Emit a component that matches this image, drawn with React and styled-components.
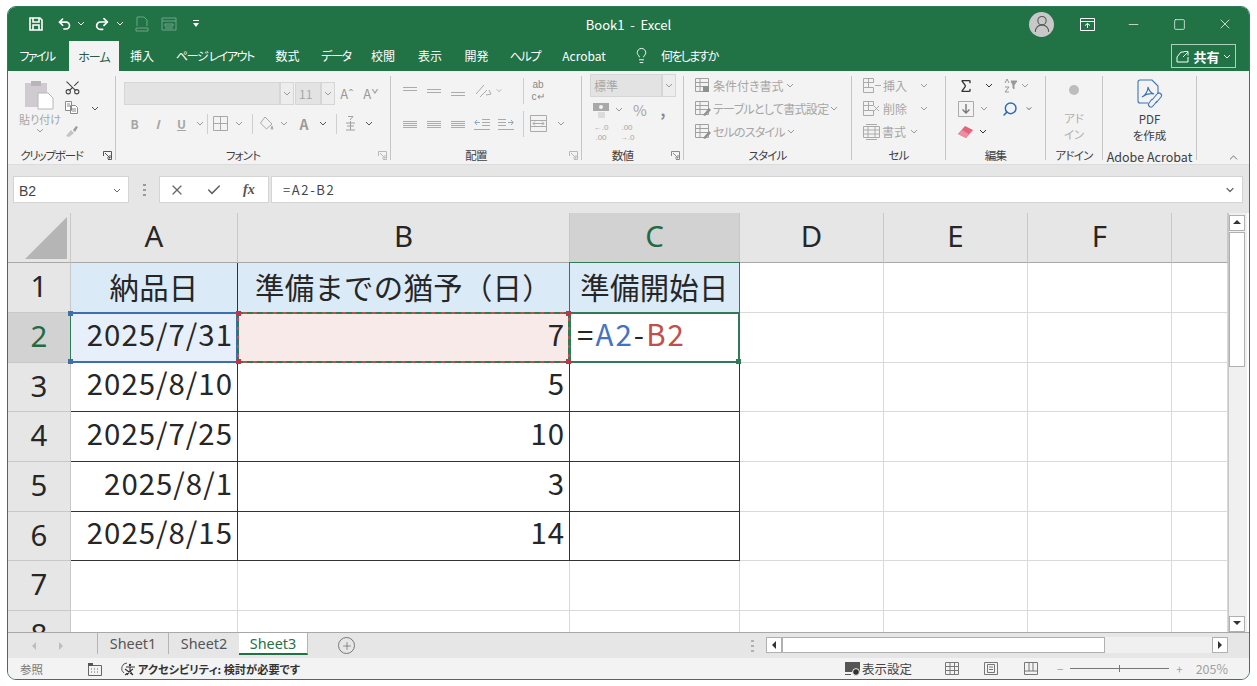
import React from 'react';
import styled, { createGlobalStyle } from 'styled-components';
import { Scissors, Undo2, Redo2, UserRound, Minus, Square, X, Check, Lightbulb, ChevronDown, ChevronUp, Sigma, Search, Plus } from 'lucide-react';

const GREEN = '#217346';
const MUTED = '#a6a6a6';

const GlobalStyle = createGlobalStyle`
  html, body { margin: 0; padding: 0; background: #fff; }
  * { box-sizing: border-box; }
  body {
    font-family: "Noto Sans CJK JP", "Noto Sans", sans-serif;
    font-feature-settings: "palt";
    color: #262626;
  }
`;

const Win = styled.div`
  width: 1243px;
  height: 674px;
  margin: 6px 0 0 7px;
  border: 1px solid #2f7a58;
  border-radius: 9px;
  overflow: hidden;
  display: flex;
  flex-direction: column;
  background: #e6e6e6;
`;

/* title bar */
const TitleBar = styled.div`
  height: 33px;
  flex: none;
  background: ${GREEN};
  display: grid;
  grid-template-columns: 1fr auto 1fr;
  align-items: center;
  color: #fff;
`;
const Quick = styled.div`
  display: flex;
  align-items: center;
  padding: 0 0 0 21px;
`;
const QuickItem = styled.span`
  display: inline-flex;
  width: ${p => p.$w}px;
  margin-left: ${p => p.$ml || 0}px;
  justify-content: center;
  align-items: center;
  opacity: ${p => (p.$dim ? 0.35 : 1)};
`;
const DocTitle = styled.div`
  font-size: 13px;
  padding-top: 1px;
  white-space: pre;
`;
const WinButtons = styled.div`
  display: flex;
  justify-content: flex-end;
  align-items: center;
  padding: 1px 1px 0 0;
`;
const Avatar = styled.span`
  width: 25px;
  height: 25px;
  border-radius: 50%;
  background: #c8c8c8;
  color: #555;
  display: inline-flex;
  align-items: center;
  justify-content: center;
  margin-right: 10px;
`;
const WinBtn = styled.span`
  width: 46px;
  display: inline-flex;
  justify-content: center;
`;

/* tab row */
const TabBar = styled.div`
  height: 31px;
  flex: none;
  background: ${GREEN};
  display: flex;
  align-items: stretch;
  color: #fff;
  font-size: 12px;
`;
const Tab = styled.div`
  width: ${p => p.$w}px;
  margin-left: ${p => p.$ml || 0}px;
  letter-spacing: ${p => p.$ls || 0}px;
  display: flex;
  align-items: center;
  justify-content: center;
  white-space: nowrap;
  ${p => p.$active && `background: #f3f3f3; color: #2b5a44; margin-top: 1px;`}
`;
const TellMe = styled.div`
  display: flex;
  align-items: center;
  gap: 11px;
  margin-left: 18px;
  letter-spacing: -1.7px;
`;
const Share = styled.div`
  margin: 4px 13px 3px auto;
  width: 65px;
  border: 1px solid #a9d1bd;
  display: flex;
  align-items: center;
  justify-content: center;
  gap: 3px;
  font-size: 13px;
  font-weight: 700;
`;

/* ribbon */
const Ribbon = styled.div`
  height: 93px;
  flex: none;
  background: #f3f3f3;
  display: flex;
  padding: 5px 0 4px;
  position: relative;
  font-size: 12px;
`;
const Group = styled.div`
  width: ${p => p.$w}px;
  height: 84px;
  flex: none;
  display: flex;
  flex-direction: column;
  border-right: 1px solid #c6c6c6;
`;
const Body = styled.div`
  flex: 1;
  min-height: 0;
  display: flex;
  flex-direction: ${p => (p.$row ? 'row' : 'column')};
  padding: ${p => p.$pad || '0'};
  gap: ${p => p.$gap || 0}px;
`;
const Label = styled.div`
  height: 16px;
  margin-bottom: -3px;
  flex: none;
  display: grid;
  grid-template-columns: 1fr auto 1fr;
  align-items: center;
  font-size: ${p => p.$fs || 11.5}px;
  letter-spacing: ${p => p.$ls ?? -0.8}px;
  color: #404040;
  white-space: nowrap;
  b { font-weight: 400; transform: translateX(${p => (p.$launch ? -10 : 0)}px); }
  span:last-child { justify-self: end; margin-right: 3px; display: inline-flex; }
`;
const Row = styled.div`
  height: ${p => p.$h || 23}px;
  flex: none;
  display: flex;
  align-items: center;
  gap: ${p => p.$gap || 0}px;
  padding-left: ${p => p.$pl || 0}px;
  margin-top: ${p => p.$mt || 0}px;
  color: ${p => p.$color || MUTED};
  letter-spacing: ${p => p.$ls || 0}px;
  white-space: nowrap;
`;
const Slot = styled.span`
  width: ${p => p.$w}px;
  height: 100%;
  flex: none;
  display: inline-flex;
  align-items: center;
  justify-content: center;
  font-size: ${p => p.$fs || 12}px;
  font-weight: ${p => p.$fw || 400};
  font-style: ${p => (p.$it ? 'italic' : 'normal')};
  text-decoration: ${p => (p.$ul ? 'underline' : 'none')};
  color: ${p => p.$color || 'inherit'};
`;
const Stack = styled.span`
  font-family: "Liberation Sans", sans-serif;
  line-height: ${p => p.$lh}px;
  text-align: center;
`;
const Sep = styled.span`
  width: 1px;
  height: ${p => p.$h || 20}px;
  margin-left: ${p => p.$ml || 0}px;
  flex: none;
  background: #cfcfcf;
`;
const FontBox = styled.span`
  width: ${p => p.$w}px;
  height: 23px;
  flex: none;
  margin-left: ${p => p.$ml || 0}px;
  background: #e3e3e3;
  border: 1px solid #d6d6d6;
  display: inline-flex;
  align-items: center;
  padding-left: 3px;
  color: #a8a8a8;
  font-size: 12px;
`;
const Spin = styled(FontBox)`
  width: 14px;
  padding: 0;
  justify-content: center;
  background: #ededed;
`;
const PasteCol = styled.div`
  width: 52px;
  margin-left: 6px;
  display: flex;
  flex-direction: column;
  align-items: center;
  gap: 2px;
  color: ${MUTED};
  font-size: 11px;
  line-height: 14px;
  white-space: nowrap;
`;
const ClipCol = styled.div`
  display: flex;
  flex-direction: column;
  width: 20px;
  margin-left: -2px;
`;
const BigCol = styled.div`
  flex: 1;
  display: flex;
  flex-direction: column;
  align-items: center;
  text-align: center;
  font-size: 11.5px;
  line-height: 16px;
  color: ${p => p.$color || '#404040'};
  padding-top: ${p => p.$pt || 0}px;
`;
const BigCaption = styled.span`
  margin-top: ${p => p.$mt}px;
`;
const Collapse = styled.span`
  position: absolute;
  right: 9px;
  bottom: 0px;
  display: inline-flex;
`;

/* formula bar */
const FormulaRow = styled.div`
  height: 49px;
  flex: none;
  display: flex;
  align-items: flex-start;
  padding: 11px 0 0 5px;
  background: #e6e6e6;
  border-top: 1px solid #dcdcdc;
`;
const FieldBox = styled.div`
  height: 27px;
  background: #fff;
  border: 1px solid #d4d4d4;
  display: flex;
  align-items: center;
  font-size: 13px;
  color: #444;
`;
const NameBox = styled(FieldBox)`
  width: 116px;
  padding: 2px 7px 0 5px;
  justify-content: space-between;
  font-size: 14px;
  font-family: "Liberation Sans", sans-serif;
`;
const Grip = styled.span`
  width: 30px;
  display: inline-flex;
  justify-content: center;
  align-items: center;
  height: 27px;
`;
const FxBox = styled(FieldBox)`
  width: 110px;
  gap: 21px;
  padding: 0 0 0 9px;
`;
const FormulaInput = styled(FieldBox)`
  width: 972px;
  margin-left: 2px;
  padding: 0 6px 0 11px;
  justify-content: space-between;
  letter-spacing: 1.6px;
`;

/* sheet */
const SheetArea = styled.div`
  height: 419px;
  flex: none;
  display: flex;
  background: #fff;
`;
const Cells = styled.div`
  width: 1220px;
  height: 419px;
  overflow: hidden;
  display: grid;
  grid-template-columns: 63px 167px 332px 170px 144px 144px 144px 56px;
  grid-template-rows: 50px 50px 50px 49px 50px 50px 49px 50px 50px;
  font-size: 29.4px;
  font-feature-settings: normal;
  color: #262626;
  flex: none;
`;
const ColHead = styled.div`
  background: ${p => (p.$sel ? '#d2d2d2' : '#e6e6e6')};
  color: ${p => (p.$sel ? '#1f6b45' : '#262626')};
  border-right: 1px solid #c8c8c8;
  border-bottom: 1px solid #a8a8a8;
  display: flex;
  align-items: center;
  justify-content: center;
  padding-bottom: 3px;
  font-family: "Noto Sans", sans-serif;
`;
const Corner = styled.div`
  background: #e6e6e6;
  border-right: 1px solid #c8c8c8;
  border-bottom: 1px solid #a8a8a8;
  padding: 4px 3px 3px 17px;
`;
const CornerMark = styled.div`
  height: 100%;
  background: #b5b5b5;
  clip-path: polygon(100% 0, 100% 100%, 0 100%);
`;
const RowHead = styled.div`
  background: ${p => (p.$sel ? '#d2d2d2' : '#e6e6e6')};
  color: ${p => (p.$sel ? '#1f6b45' : '#262626')};
  border-right: 1px solid #c8c8c8;
  border-bottom: 1px solid #c8c8c8;
  display: flex;
  align-items: flex-start;
  padding-top: 1px;
  justify-content: center;
  font-family: "Noto Sans", sans-serif;
  line-height: 44px;
`;
const Cell = styled.div`
  position: relative;
  background: ${p => p.$bg || '#fff'};
  border-right: 1px solid ${p => (p.$boxed ? '#333' : '#d9d9d9')};
  border-bottom: 1px solid ${p => (p.$boxed ? '#333' : '#d9d9d9')};
  display: flex;
  align-items: center;
  white-space: nowrap;
`;
const HeadCell = styled(Cell)`
  justify-content: center;
  padding-bottom: 4px;
  letter-spacing: 0.3px;
`;
const ValueCell = styled(Cell)`
  justify-content: flex-end;
  padding: 0 4px 10px 0;
  letter-spacing: 1px;
`;
const FormulaCell = styled(Cell)`
  padding: 0 0 10px 7px;
  letter-spacing: 2.1px;
`;
const RefFrame = styled.span`
  position: absolute;
  inset: -1px;
  border: ${p => p.$line};
  ${p => p.$left && `border-left: 1px solid ${p.$left};`}
  z-index: ${p => p.$z || 1};
  pointer-events: none;
`;
const Dot = styled.i`
  position: absolute;
  width: 5px;
  height: 5px;
  background: ${p => p.$c};
  ${p => (p.$y === 'top' ? 'top: -3px;' : 'bottom: -3px;')}
  ${p => (p.$x === 'left' ? 'left: -3px;' : 'right: -3px;')}
`;
const Ref = styled.span`
  color: ${p => p.$c};
`;
const VBar = styled.div`
  width: 19px;
  flex: none;
  background: #f0f0f0;
  border-left: 1px solid #c6c6c6;
  display: flex;
  flex-direction: column;
  padding-top: 2px;
`;
const ArrowBtn = styled.div`
  width: 16px;
  height: 16px;
  flex: none;
  background: #fff;
  border: 1px solid #b0b0b0;
  display: flex;
  align-items: center;
  justify-content: center;
`;
const VThumb = styled.div`
  height: 135px;
  width: 16px;
  margin-top: 1px;
  background: #fff;
  border: 1px solid #b0b0b0;
  flex: none;
`;
const Fill = styled.div`
  flex: 1;
`;

/* sheet tabs */
const TabsRow = styled.div`
  height: 26px;
  flex: none;
  background: #e6e6e6;
  border-top: 1px solid #a8a8a8;
  display: flex;
  align-items: stretch;
  font-size: 14.4px;
  font-family: "Noto Sans", sans-serif;
  color: #555;
`;
const NavArrows = styled.div`
  width: 89px;
  display: flex;
  align-items: center;
  gap: 19px;
  padding-left: 22px;
  flex: none;
`;
const SheetTab = styled.div`
  width: ${p => (p.$active ? 69 : 71)}px;
  margin-bottom: ${p => (p.$active ? 3 : 4)}px;
  display: flex;
  align-items: center;
  justify-content: center;
  ${p => !p.$active && `border-left: 1px solid #b4b4b4;`}
  ${p => p.$active && `background: #fff; color: ${GREEN}; border-bottom: 2px solid ${GREEN}; border-right: 1px solid #b4b4b4;`}
`;
const AddSheet = styled.span`
  width: 17px;
  height: 17px;
  border-radius: 50%;
  border: 1px solid #777;
  margin: 4px 0 0 30px;
  display: inline-flex;
  align-items: center;
  justify-content: center;
  flex: none;
`;
const HGrip = styled.span`
  margin-left: auto;
  width: 28px;
  display: inline-flex;
  align-items: center;
  justify-content: center;
`;
const HBar = styled.div`
  width: 462px;
  height: 16px;
  margin: 4px 21px 0 0;
  background: #f0f0f0;
  display: flex;
  flex: none;
`;
const HThumb = styled.div`
  width: 323px;
  background: #fff;
  border: 1px solid #b0b0b0;
`;

/* status bar */
const Status = styled.div`
  height: 21px;
  flex: none;
  background: #f3f3f3;
  display: flex;
  align-items: center;
  font-size: 11.5px;
  color: #777;
  padding-right: 21px;
`;
const StatusText = styled.span`
  font-weight: ${p => p.$fw || 400};
  color: ${p => p.$color || 'inherit'};
  margin-left: ${p => p.$ml || 0}px;
  font-size: ${p => p.$fs || 11.5}px;
  white-space: nowrap;
`;
const StatusIcon = styled.span`
  display: inline-flex;
  margin-left: ${p => (p.$auto ? 'auto' : `${p.$ml || 0}px`)};
  margin-right: ${p => p.$mr || 0}px;
  flex: none;
`;
const Slider = styled.span`
  width: 99px;
  height: 1px;
  background: #777;
  margin: 0 7px;
  display: inline-flex;
  align-items: center;
  justify-content: center;
  flex: none;
  &::after { content: ''; width: 1px; height: 7px; background: #777; }
`;

/* drawings */
const Chev = ({ c = '#9a9a9a' }) => (
  <svg width="8" height="5" viewBox="0 0 8 5"><path d="M1 1l3 3 3-3" fill="none" stroke={c} strokeWidth="1" /></svg>
);
const Launcher = ({ c = '#8a8a8a' }) => (
  <svg width="9" height="9" viewBox="0 0 9 9" fill="none" stroke={c}><path d="M.5 5V.5H8.5V8.5H5M2 2l5 5M7 4v3H4" /></svg>
);
const Lines = ({ ys }) => (
  <svg width="16" height="12" viewBox="0 0 16 12" stroke="#ababab">
    {ys.map(y => <path key={y} d={`M1 ${y + 0.5}H15`} />)}
  </svg>
);
const SaveIcon = () => (
  <svg width="14" height="14" viewBox="0 0 14 14" fill="none" stroke="#fff" strokeWidth="1.6">
    <path d="M1 1h10l2 2v10H1zM4 1v4h6V1M4 13V8h6v5" />
  </svg>
);
const DocIcon = () => (
  <svg width="14" height="16" viewBox="0 0 14 16" fill="none" stroke="#fff"><path d="M2 10V1h7l3 3v6M1 12h12v3H1z" /></svg>
);
const FormIcon = () => (
  <svg width="16" height="14" viewBox="0 0 16 14" fill="none" stroke="#fff"><path d="M1 1h14v12H1zM1 4h14M4 7h8v2H4zM4 11h8" /></svg>
);
const PasteIcon = () => (
  <svg width="30" height="32" viewBox="0 0 30 32">
    <path d="M0 5h22v24H0z" fill="#cfcbd0" />
    <path d="M6 3h10v5H6z" fill="#b8b4b9" />
    <path d="M13 15h10l5 5v11H13z" fill="#fff" stroke="#b8b8b8" />
  </svg>
);
const CopyIcon = () => (
  <svg width="15" height="15" viewBox="0 0 15 15" fill="#fff" stroke="#8a8a8a"><path d="M1.5 1.5h6v9h-6zM6.5 5.5h5l2 2v6h-7z" /><path d="M3 4h3M3 6h3M8 9h4M8 11h4" /></svg>
);
const BrushIcon = () => (
  <svg width="16" height="14" viewBox="0 0 16 14"><path d="M2 12l5-6 3 3-5 4z" fill="#c4c4c4" /><path d="M9 6l3-4 2 1-3 5z" fill="#9d9d9d" /></svg>
);
const BorderIcon = () => (
  <svg width="15" height="15" viewBox="0 0 15 15" fill="none" stroke="#a8a8a8"><path d="M.5.5h14v14H.5zM7.5.5v14M.5 7.5h14" /></svg>
);
const BucketIcon = () => (
  <svg width="15" height="15" viewBox="0 0 15 15" fill="none" stroke="#a8a8a8"><path d="M6 1L1.5 7l6 6 5.5-5zM13 10l1 3h-2z" /></svg>
);
const PhoneticIcon = () => (
  <svg width="11" height="17" viewBox="0 0 11 17" stroke="#a0a0a0" fill="none"><path d="M3 1.5h5L5 5M1 8h9M5.500 6v9M2 11h7M1 15h9" /></svg>
);
const OrientIcon = () => (
  <svg width="17" height="15" viewBox="0 0 17 15" fill="none" stroke="#aaa"><path d="M1 11L9 2M5 14l7-7M11 12l5-1-2-4" /></svg>
);
const IndentIcon = ({ flip }) => (
  <svg width="16" height="14" viewBox="0 0 16 14" fill="none" stroke="#aaa" style={flip ? { transform: 'scaleX(-1)' } : undefined}>
    <path d="M8 2.5h8M8 5.5h8M8 8.5h8M0 12.5h16" /><path d="M6 5.5H1M3 3L.8 5.5 3 8" stroke="#8fa7bb" />
  </svg>
);
const MergeIcon = () => (
  <svg width="17" height="17" viewBox="0 0 17 17" fill="none" stroke="#aaa"><path d="M.5.5h16v16H.5zM.5 5.500h16M.5 11.500h16M3 8.500h11M5 6.500l-2 2 2 2M12 6.500l2 2-2 2" /></svg>
);
const AcctIcon = () => (
  <svg width="16" height="16" viewBox="0 0 16 16"><path d="M0 1h16v8H0z" fill="#a9a9a9" /><circle cx="8" cy="5" r="2" fill="#f3f3f3" /><path d="M5 11h7M5 13h7M5 15h7" stroke="#c4c4c4" /></svg>
);
const TableIcon = ({ kind }) => (
  <svg width="16" height="16" viewBox="0 0 16 16" fill="none" stroke="#a0a0a0">
    <path d="M.5.5h13v13H.5zM.5 4.500h13M.5 8.500h13M5 .5v13" />
    {kind === 'brush' && <path d="M8 14l6-7 2 2-6 6z" fill="#909090" stroke="none" />}
    {kind === 'mark' && <path d="M8 8h6v6H8z" fill="#909090" stroke="none" />}
  </svg>
);
const CellOpIcon = ({ mark }) => (
  <svg width="18" height="15" viewBox="0 0 18 15" fill="none" stroke="#aaa">
    <path d="M.5.5h10v4H.5zM.5 4.500h5v5h-5zM5.500 4.500h5M.5 9.500h10v5H.5zM5.500.5v4" />
    {mark === 'x' ? <path d="M11 5l5 5M16 5l-5 5" /> : <path d="M12 7.500h6" />}
  </svg>
);
const FormatIcon = () => (
  <svg width="17" height="16" viewBox="0 0 17 16" fill="none" stroke="#aaa"><path d="M.5 2.500h16v11H.5zM5 2.500v11M12 2.500v11M.5 6h16M.5 10h16M3 .5h11M3 15.500h11" /></svg>
);
const SortIcon = () => (
  <svg width="15" height="15" viewBox="0 0 15 15" fill="none" stroke="#999"><path d="M2 5l2-4 2 4M2 9h4L2 14h4" /><path d="M8 3h6l-3 4v4l-1-1V7z" fill="#999" /></svg>
);
const FillDown = () => (
  <svg width="16" height="16" viewBox="0 0 16 16" fill="none" stroke="#aaa"><path d="M.5.5h15v15H.5z" /><path d="M8 3v9M4.500 8.500L8 12l3.500-3.500" stroke="#777" strokeWidth="1.4" /></svg>
);
const EraserIcon = () => (
  <svg width="16" height="14" viewBox="0 0 16 14"><path d="M0 9l7-8 8 4-7 8z" fill="#e8627b" /><path d="M0 9l4-4 7 4-3 4z" fill="#ec8fa0" /></svg>
);
const PdfIcon = () => (
  <svg width="28" height="30" viewBox="0 0 28 30" fill="none" stroke="#3e73b5" strokeWidth="1.1">
    <path d="M12 24H4a2 2 0 01-2-2V3a2 2 0 012-2h12l6 6v8" />
    <path d="M6 18c3-1 6-6 6-10 1 4 3 6 6 7-4-1-8 0-12 3z" />
    <path d="M16 21l5-6a2.500 2.500 0 014 3l-5 6M21 22l-4 5a2.500 2.500 0 01-4-3l3-4" />
  </svg>
);
const FxMark = styled.span`
  font-family: "Liberation Serif", serif;
  font-style: italic;
  font-weight: 700;
  font-size: 14px;
  color: #555;
`;
const DotsV = ({ c = '#9a9a9a' }) => (
  <svg width="3" height="12" viewBox="0 0 3 12" fill={c}><path d="M0 0h3v2H0zM0 5h3v2H0zM0 10h3v2H0z" /></svg>
);
const Tri = ({ dir, c = '#333' }) => {
  const d = { up: 'M0 5l4-4 4 4z', down: 'M0 1l4 4 4-4z', left: 'M6 0L2 4l4 4z', right: 'M2 0l4 4-4 4z' }[dir];
  return <svg width="8" height="8" viewBox="0 0 8 8" fill={c}><path d={d} /></svg>;
};
const SettingsIcon = () => (
  <svg width="17" height="14" viewBox="0 0 17 14"><path d="M0 0h15v10H0z" fill="#555" /><circle cx="11" cy="10" r="3.400" fill="#333" stroke="#f3f3f3" /><path d="M0 12h6v1H0z" fill="#555" /></svg>
);
const GridIcon = () => (
  <svg width="14" height="13" viewBox="0 0 14 13" fill="none" stroke="#777"><path d="M.5.5h13v12H.5zM.5 4.500h13M.5 8.500h13M5 .5v12M9.500.5v12" /></svg>
);
const PageIcon = () => (
  <svg width="14" height="13" viewBox="0 0 14 13" fill="none" stroke="#777"><path d="M.5.5h13v12H.5zM3.500 2.500h7v8h-7zM5 5h4M5 7.500h4" /></svg>
);
const BreakIcon = () => (
  <svg width="14" height="13" viewBox="0 0 14 13" fill="none" stroke="#777"><path d="M.5.5h13v12H.5zM.5 9h13M5 .5V9M9 .5V9" /></svg>
);
const MacroIcon = () => (
  <svg width="14" height="14" viewBox="0 0 14 14" fill="none" stroke="#666"><path d="M.5 3.500h13v10H.5z" /><path d="M0 1h5v3H0z" fill="#555" stroke="none" /><path d="M3 7h1M6 7h1M9 7h1M3 10h1M6 10h1M9 10h1" /></svg>
);
const AccessIcon = () => (
  <svg width="17" height="16" viewBox="0 0 17 16" fill="none" stroke="#555"><path d="M7 2a5.500 5.500 0 00-3 10" /><circle cx="10" cy="4" r="1.200" fill="#333" stroke="none" /><path d="M6 6h9M10 6v4M7 14l3-4 3 4M5 8l8 6M13 8l-8 6" stroke="#333" strokeWidth="1.1" /></svg>
);
const ShareIcon = () => (
  <svg width="14" height="13" viewBox="0 0 14 13" fill="none" stroke="#fff"><path d="M1 12V7l4-5h3M1 12h11V7M7 7l5-5M8 1.500h4v4" /></svg>
);

const tabs = [
  { label: 'ファイル', w: 58, ls: -1.6 },
  { label: 'ホーム', w: 50, active: true, ml: 3, ls: -1 },
  { label: '挿入', w: 46 },
  { label: 'ページ レイアウト', w: 100, ls: -1.4 },
  { label: '数式', w: 45 },
  { label: 'データ', w: 52, ls: -1.2 },
  { label: '校閲', w: 42 },
  { label: '表示', w: 52 },
  { label: '開発', w: 41 },
  { label: 'ヘルプ', w: 56, ls: -1.2 },
  { label: 'Acrobat', w: 62 },
];
const columns = ['A', 'B', 'C', 'D', 'E', 'F', ''];
const data = [
  ['2025/7/31', '7'], ['2025/8/10', '5'], ['2025/7/25', '10'], ['2025/8/1', '3'], ['2025/8/15', '14'],
];

function Sheet() {
  const blank = from => columns.slice(from).map((c, i) => <Cell key={i} />);
  return (
    <Cells>
      <Corner><CornerMark /></Corner>
      {columns.map(c => <ColHead key={c} $sel={c === 'C'}>{c}</ColHead>)}

      <RowHead>1</RowHead>
      <HeadCell $boxed $bg="#daeaf7">納品日</HeadCell>
      <HeadCell $boxed $bg="#daeaf7">準備までの猶予（日）</HeadCell>
      <HeadCell $boxed $bg="#daeaf7">
        準備開始日
        <RefFrame $line="1px solid #2f7a58" />
      </HeadCell>
      {blank(3)}

      {data.map(([date, days], i) => (
        <React.Fragment key={date}>
          <RowHead $sel={i === 0}>{i + 2}</RowHead>
          <ValueCell $boxed $bg={i === 0 ? '#e7f0fa' : '#fff'}>
            {date}
            {i === 0 && (
              <RefFrame $line="2px solid #3b6fb0" $left="#2f7a58">
                <Dot $x="left" $y="top" $c="#3b6fb0" />
                <Dot $x="left" $y="bottom" $c="#3b6fb0" />
              </RefFrame>
            )}
          </ValueCell>
          <ValueCell $boxed $bg={i === 0 ? '#f9eaea' : '#fff'}>
            {days}
            {i === 0 && (
              <>
                <RefFrame $line="2px solid #c0504d" $z={2} />
                <RefFrame $line="2px dashed #2f7a50" $z={3}>
                  <Dot $x="left" $y="top" $c="#c0344a" />
                  <Dot $x="right" $y="top" $c="#c0344a" />
                  <Dot $x="left" $y="bottom" $c="#c0344a" />
                  <Dot $x="right" $y="bottom" $c="#c0344a" />
                </RefFrame>
              </>
            )}
          </ValueCell>
          <FormulaCell $boxed>
            {i === 0 && (
              <>
                =<Ref $c="#4472c4">A2</Ref>-<Ref $c="#c0504d">B2</Ref>
                <RefFrame $line="2px solid #2f7a58">
                  <Dot $x="right" $y="bottom" $c="#2f7a58" />
                </RefFrame>
              </>
            )}
          </FormulaCell>
          {blank(3)}
        </React.Fragment>
      ))}

      <RowHead>7</RowHead>
      {blank(0)}
      <RowHead>8</RowHead>
      {blank(0)}
    </Cells>
  );
}

export default function App() {
  return (
    <>
      <GlobalStyle />
      <Win>
        <TitleBar>
          <Quick>
            <QuickItem $w={14}><SaveIcon /></QuickItem>
            <QuickItem $w={15} $ml={14}><Undo2 size={16} strokeWidth={2.6} /></QuickItem>
            <QuickItem $w={18}><Chev c="#fff" /></QuickItem>
            <QuickItem $w={24}><Redo2 size={16} strokeWidth={2.6} /></QuickItem>
            <QuickItem $w={12}><Chev c="#fff" /></QuickItem>
            <QuickItem $w={32} $dim><DocIcon /></QuickItem>
            <QuickItem $w={22} $dim><FormIcon /></QuickItem>
            <QuickItem $w={32}>
              <svg width="6" height="7" viewBox="0 0 6 7" fill="#fff"><path d="M0 0h6v1H0zM0 3h6L3 7z" /></svg>
            </QuickItem>
          </Quick>
          <DocTitle>{'Book1  -  Excel'}</DocTitle>
          <WinButtons>
            <Avatar><UserRound size={20} strokeWidth={1.3} /></Avatar>
            <WinBtn>
              <svg width="15" height="13" viewBox="0 0 15 13" fill="none" stroke="#fff"><path d="M.5.5h14v12H.5zM.5 3.500h14M7.500 10V5.500M5 7.500l2.500-2 2.500 2" /></svg>
            </WinBtn>
            <WinBtn><Minus size={15} strokeWidth={1.1} /></WinBtn>
            <WinBtn><Square size={13} strokeWidth={1.3} /></WinBtn>
            <WinBtn><X size={16} strokeWidth={1.1} /></WinBtn>
          </WinButtons>
        </TitleBar>

        <TabBar>
          {tabs.map(t => (
            <Tab key={t.label} $w={t.w} $active={t.active} $ml={t.ml} $ls={t.ls}>{t.label}</Tab>
          ))}
          <TellMe>
            <Lightbulb size={17} strokeWidth={1.3} />
            何をしますか
          </TellMe>
          <Share>
            <ShareIcon />
            共有
            <Chev c="#fff" />
          </Share>
        </TabBar>

        <Ribbon>
          <Group $w={108}>
            <Body $row $pad="2px 0 0 0">
              <PasteCol>
                <PasteIcon />
                <span>貼り付け</span>
                <Chev />
              </PasteCol>
              <ClipCol>
                <Row $color="#444" $h={18}><Scissors size={17} strokeWidth={1.5} style={{ transform: 'rotate(-90deg)' }} /></Row>
                <Row><CopyIcon /></Row>
                <Row><BrushIcon /></Row>
              </ClipCol>
              <Row $pl={7} $h={60}><Chev c="#555" /></Row>
            </Body>
            <Label $launch $ls={-1.2}><span /><b>クリップボード</b><span><Launcher c="#555" /></span></Label>
          </Group>

          <Group $w={275}>
            <Body $pad="6px 0 0 8px" $gap={8}>
              <Row>
                <FontBox $w={156} />
                <Spin><Chev /></Spin>
                <FontBox $w={26} $ml={1}>11</FontBox>
                <Spin><Chev /></Spin>
                <Slot $w={24} $fs={13} $color="#9a9a9a">Aˆ</Slot>
                <Slot $w={24} $fs={13} $color="#9a9a9a">Aˇ</Slot>
              </Row>
              <Row $mt={-1}>
                <Slot $w={21} $fw={700} $fs={12}>B</Slot>
                <Slot $w={25} $it $fw={700} $fs={12}>I</Slot>
                <Slot $w={23} $ul $fw={700} $fs={12}>U</Slot>
                <Slot $w={14}><Chev /></Slot>
                <Sep />
                <Slot $w={24}><BorderIcon /></Slot>
                <Slot $w={14}><Chev /></Slot>
                <Sep $ml={6} />
                <Slot $w={26}><BucketIcon /></Slot>
                <Slot $w={10}><Chev /></Slot>
                <Slot $w={30} $fw={700} $fs={14} $color="#9a9a9a">A</Slot>
                <Slot $w={8}><Chev c="#555" /></Slot>
                <Sep $ml={9} />
                <Slot $w={26}><PhoneticIcon /></Slot>
                <Slot $w={12}><Chev c="#555" /></Slot>
              </Row>
            </Body>
            <Label $launch><span /><b>フォント</b><span><Launcher c="#b8b8b8" /></span></Label>
          </Group>

          <Group $w={191}>
            <Body $pad="3px 0 0 7px" $gap={10}>
              <Row>
                <Slot $w={24}><Lines ys={[2, 5]} /></Slot>
                <Slot $w={24}><Lines ys={[4, 7]} /></Slot>
                <Slot $w={24}><Lines ys={[7, 10]} /></Slot>
                <Slot $w={26}><OrientIcon /></Slot>
                <Slot $w={6}><Chev /></Slot>
                <Slot $w={21} />
                <Sep $h={26} />
                <Slot $w={28} $fs={10} $color="#888"><Stack $lh={12}>ab<br />c↵</Stack></Slot>
              </Row>
              <Row>
                <Slot $w={24}><Lines ys={[3, 5, 7, 9]} /></Slot>
                <Slot $w={24}><Lines ys={[3, 5, 7, 9]} /></Slot>
                <Slot $w={24}><Lines ys={[3, 5, 7, 9]} /></Slot>
                <Slot $w={24}><IndentIcon /></Slot>
                <Slot $w={24}><IndentIcon flip /></Slot>
                <Slot $w={5} />
                <Sep $h={26} />
                <Slot $w={28}><MergeIcon /></Slot>
                <Slot $w={18}><Chev /></Slot>
              </Row>
            </Body>
            <Label $launch><span /><b>配置</b><span><Launcher c="#b8b8b8" /></span></Label>
          </Group>

          <Group $w={102}>
            <Body $pad="0 0 0 8px">
              <Row $h={22} $mt={-2}>
                <FontBox $w={72}>標準</FontBox>
                <Spin><Chev /></Spin>
              </Row>
              <Row $h={23} $pl={3} $mt={2}>
                <AcctIcon />
                <Slot $w={19}><Chev /></Slot>
                <Slot $w={24} $fs={15}>%</Slot>
                <Slot $w={22} $fs={15} $fw={700} $color="#888">,</Slot>
              </Row>
              <Row $h={24} $pl={3} $gap={10}>
                <Slot $w={16} $fs={8}><Stack $lh={10}>←.0<br />.00</Stack></Slot>
                <Slot $w={16} $fs={8}><Stack $lh={10}>.00<br />→.0</Stack></Slot>
              </Row>
            </Body>
            <Label $launch><span /><b>数値</b><span><Launcher c="#8a8a8a" /></span></Label>
          </Group>

          <Group $w={168}>
            <Body $pad="0 0 0 11px">
              <Row $gap={2} $mt={-2}><TableIcon kind="mark" />条件付き書式 <Chev /></Row>
              <Row $gap={2} $ls={-0.7}><TableIcon kind="brush" />テーブルとして書式設定 <Chev /></Row>
              <Row $gap={2} $ls={-0.8}><TableIcon kind="brush" />セルのスタイル <Chev /></Row>
            </Body>
            <Label><span /><b>スタイル</b><span /></Label>
          </Group>

          <Group $w={94}>
            <Body $pad="0 0 0 11px">
              <Row $gap={2} $mt={-2}><CellOpIcon />挿入<Slot $w={30}><Chev /></Slot></Row>
              <Row $gap={2}><CellOpIcon mark="x" />削除<Slot $w={30}><Chev /></Slot></Row>
              <Row $gap={2}><FormatIcon />書式<Slot $w={12}><Chev /></Slot></Row>
            </Body>
            <Label><span /><b>セル</b><span /></Label>
          </Group>

          <Group $w={100}>
            <Body $pad="0 0 0 12px">
              <Row $mt={-2} $color="#333">
                <Sigma size={16} strokeWidth={2} />
                <Slot $w={29}><Chev c="#333" /></Slot>
                <SortIcon />
                <Slot $w={14}><Chev /></Slot>
              </Row>
              <Row>
                <FillDown />
                <Slot $w={20}><Chev /></Slot>
                <Slot $w={32} $color="#2a6cb8"><Search size={16} strokeWidth={2.2} style={{ transform: 'scaleX(-1)' }} /></Slot>
                <Slot $w={6}><Chev c="#333" /></Slot>
              </Row>
              <Row>
                <EraserIcon />
                <Slot $w={18}><Chev c="#333" /></Slot>
              </Row>
            </Body>
            <Label><span /><b>編集</b><span /></Label>
          </Group>

          <Group $w={57}>
            <BigCol $color="#b0b0b0" $pt={7}>
              <svg width="14" height="14" viewBox="0 0 14 14"><circle cx="7" cy="7" r="5" fill="#bdbdbd" /></svg>
              <BigCaption $mt={13}>アド<br />イン</BigCaption>
            </BigCol>
            <Label><span /><b>アドイン</b><span /></Label>
          </Group>

          <Group $w={94}>
            <BigCol $pt={3}>
              <PdfIcon />
              <BigCaption $mt={2}>PDF<br />を作成</BigCaption>
            </BigCol>
            <Label $fs={12.5} $ls={0}><span /><b>Adobe Acrobat</b><span /></Label>
          </Group>

          <Collapse><ChevronUp size={13} color="#555" strokeWidth={1.5} /></Collapse>
        </Ribbon>

        <FormulaRow>
          <NameBox>B2<Chev c="#666" /></NameBox>
          <Grip><DotsV /></Grip>
          <FxBox>
            <X size={16} strokeWidth={1.8} color="#666" />
            <Check size={16} strokeWidth={2.4} color="#666" />
            <FxMark>fx</FxMark>
          </FxBox>
          <FormulaInput>=A2-B2<ChevronDown size={12} strokeWidth={2.4} color="#666" /></FormulaInput>
        </FormulaRow>

        <SheetArea>
          <Sheet />
          <VBar>
            <ArrowBtn><Tri dir="up" /></ArrowBtn>
            <VThumb />
            <Fill />
            <ArrowBtn><Tri dir="down" /></ArrowBtn>
          </VBar>
        </SheetArea>

        <TabsRow>
          <NavArrows>
            <Tri dir="left" c="#bdbdbd" />
            <Tri dir="right" c="#bdbdbd" />
          </NavArrows>
          <SheetTab>Sheet1</SheetTab>
          <SheetTab>Sheet2</SheetTab>
          <SheetTab $active>Sheet3</SheetTab>
          <AddSheet><Plus size={12} strokeWidth={1.2} color="#555" /></AddSheet>
          <HGrip><DotsV c="#b0b0b0" /></HGrip>
          <HBar>
            <ArrowBtn><Tri dir="left" /></ArrowBtn>
            <HThumb />
            <Fill />
            <ArrowBtn><Tri dir="right" /></ArrowBtn>
          </HBar>
        </TabsRow>

        <Status>
          <StatusText $ml={12}>参照</StatusText>
          <StatusIcon $ml={45}><MacroIcon /></StatusIcon>
          <StatusIcon $ml={18} $mr={1}><AccessIcon /></StatusIcon>
          <StatusText $fw={700} $color="#333" $fs={11.2}>アクセシビリティ: 検討が必要です</StatusText>
          <StatusIcon $auto><SettingsIcon /></StatusIcon>
          <StatusText $color="#444" $fs={12.5}>表示設定</StatusText>
          <StatusIcon $ml={33}><GridIcon /></StatusIcon>
          <StatusIcon $ml={25}><PageIcon /></StatusIcon>
          <StatusIcon $ml={26}><BreakIcon /></StatusIcon>
          <StatusText $ml={19} $color="#a0a0a0">−</StatusText>
          <Slider />
          <StatusText $color="#a0a0a0">+</StatusText>
          <StatusText $ml={13} $color="#a0a0a0" $fs={12.5}>205%</StatusText>
        </Status>
      </Win>
    </>
  );
}
